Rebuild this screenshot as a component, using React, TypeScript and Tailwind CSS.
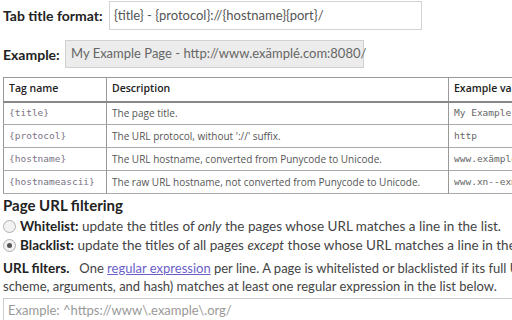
const font = { fontFamily: 'Lato, "Open Sans", sans-serif' };
const tableFont = { fontFamily: '"Open Sans", "Noto Sans", sans-serif' };
const mono = { fontFamily: '"DejaVu Sans Mono", monospace' };

const rows = [
  ['{title}', 'The page title.', 'My Example Page'],
  ['{protocol}', "The URL protocol, without '://' suffix.", 'http'],
  ['{hostname}', 'The URL hostname, converted from Punycode to Unicode.', 'www.exämplé.com'],
  ['{hostnameascii}', 'The raw URL hostname, not converted from Punycode to Unicode.', 'www.xn--exmpl-loa.com'],
];

function Radio({ checked }: { checked?: boolean }) {
  return (
    <span className="flex h-[13px] w-[13px] shrink-0 items-center justify-center rounded-full border border-[#b0b0b0] bg-[#f2f2f2]">
      {checked && <span className="h-[5px] w-[5px] rounded-full bg-[#555]" />}
    </span>
  );
}

export default function App() {
  return (
    <div className="h-[320px] w-[512px] overflow-hidden bg-white text-[#333]" style={font}>
      <div className="w-[600px] pl-[3px] pt-[1px]">
        <div className="flex items-center">
          <span className="w-[106px] whitespace-nowrap text-[14px] font-bold text-[#222]">Tab title format:</span>
          <div className="flex h-[29px] w-[313px] items-center border border-[#d3d3d3] px-[4px] text-[13px] text-[#555]">
            {'{title} - {protocol}://{hostname}{port}/'}
          </div>
        </div>
        <div className="mt-[10px] flex items-center">
          <span className="w-[62px] text-[14px] font-bold text-[#222]">Example:</span>
          <div className="flex h-[28px] w-[299px] items-center whitespace-nowrap border border-[#d0d0d0] bg-[#ececec] px-[5px] text-[13px] text-[#666]">
            My Example Page - http://www.exämplé.com:8080/
          </div>
        </div>
        <table className="mt-[9px] w-[560px] table-fixed border-collapse border border-[#999] text-[10px]" style={tableFont}>
          <thead>
            <tr className="h-[24px] border-b-2 border-[#888]">
              <th className="w-[103px] border-r border-[#999] px-[5px] text-left text-[10.5px] font-semibold text-[#222]">Tag name</th>
              <th className="w-[342px] border-r border-[#999] px-[5px] text-left text-[10.5px] font-semibold text-[#222]">Description</th>
              <th className="whitespace-nowrap px-[5px] text-left text-[10.5px] font-semibold text-[#222]">Example value</th>
            </tr>
          </thead>
          <tbody>
            {rows.map((r) => (
              <tr key={r[0]} className="h-[23px] border-b border-[#aaa]">
                <td className="border-r border-[#999] px-[5px] text-[9.5px] text-[#7a7385]" style={mono}>{r[0]}</td>
                <td className="whitespace-nowrap border-r border-[#999] px-[5px] text-[#555]">{r[1]}</td>
                <td className="whitespace-nowrap px-[5px] text-[9.5px] text-[#666]" style={mono}>{r[2]}</td>
              </tr>
            ))}
          </tbody>
        </table>
        <div className="text-[15px] font-bold leading-[22px] text-[#222]">Page URL filtering</div>
        <div className="mt-[1px] flex items-center gap-[4px] text-[13.5px] leading-[19px] text-[#444]">
          <Radio />
          <span className="whitespace-nowrap"><b className="text-[#222]">Whitelist:</b> update the titles of <i>only</i> the pages whose URL matches a line in the list.</span>
        </div>
        <div className="flex items-center gap-[4px] text-[13.5px] leading-[19px] text-[#444]">
          <Radio checked />
          <span className="whitespace-nowrap"><b className="text-[#222]">Blacklist:</b> update the titles of all pages <i>except</i> those whose URL matches a line in the list.</span>
        </div>
        <p className="mt-[4px] whitespace-nowrap text-[13px] leading-[18px] text-[#444]">
          <b className="text-[13.5px] text-[#222]">URL filters.</b>&nbsp;&nbsp; One <a className="text-[#6b5fc7] underline">regular expression</a> per line. A page is whitelisted or blacklisted if its full URL (including
          <br />
          scheme, arguments, and hash) matches at least one regular expression in the list below.
        </p>
        <div className="mt-[3px] h-[60px] w-[560px] border border-[#ccc] px-[4px] pt-[2px] text-[13px] text-[#999]">
          Example: ^https://www\.example\.org/
        </div>
      </div>
    </div>
  );
}
